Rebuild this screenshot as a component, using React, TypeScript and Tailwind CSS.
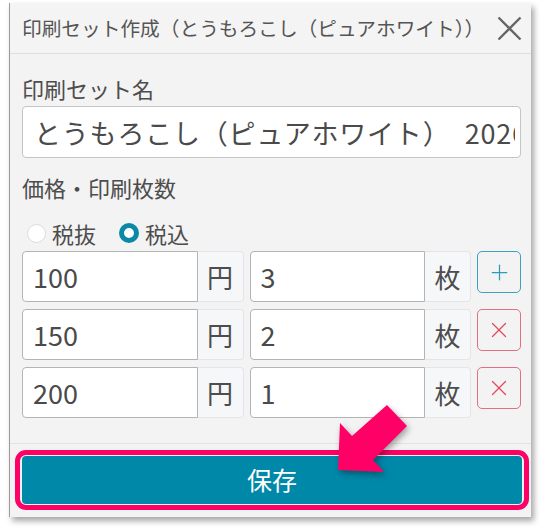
import { Plus, X } from "lucide-react";

type Row = { price: string; count: string; add: boolean };

const rows: Row[] = [
  { price: "100", count: "3", add: true },
  { price: "150", count: "2", add: false },
  { price: "200", count: "1", add: false },
];

const Radio = ({ checked, label, className }: { checked: boolean; label: string; className?: string }) => (
  <label className={`flex items-center ${className ?? ""}`}>
    <span
      className={
        checked
          ? "w-[20px] h-[20px] rounded-full border-[5px] border-[#0a8aa6] bg-white"
          : "w-[19px] h-[19px] rounded-full border border-[#dcdcdc] bg-white"
      }
    />
    <span className="ml-[6px] text-[22px] leading-[30px]">{label}</span>
  </label>
);

const Group = ({ value, unit }: { value: string; unit: string }) => (
  <div className="flex flex-1 min-w-0">
    <input
      readOnly
      value={value}
      className="w-0 min-w-0 flex-1 h-full bg-white border border-[#b4b4b4] rounded-l-[4px] pl-[10px] text-[27px] text-[#4a4a4a] outline-none"
    />
    <span className="w-[46px] shrink-0 flex items-center justify-center bg-[#f6f7f9] border border-l-0 border-[#e3e5e8] rounded-r-[4px] text-[26px]">
      {unit}
    </span>
  </div>
);

const PriceRow = ({ row }: { row: Row }) => (
  <div className="flex h-[51px] gap-[6px]">
    <Group value={row.price} unit="円" />
    <Group value={row.count} unit="枚" />
    {row.add ? (
      <button className="w-[44px] h-[42px] shrink-0 rounded-[5px] border border-[#3d9fc2] text-[#2a9cc0] flex items-center justify-center">
        <Plus size={25} strokeWidth={1.2} />
      </button>
    ) : (
      <button className="w-[44px] h-[42px] shrink-0 rounded-[5px] border border-[#e2707e] text-[#e2475c] flex items-center justify-center">
        <X size={26} strokeWidth={1.2} />
      </button>
    )}
  </div>
);

export default function App() {
  return (
    <div className="relative w-[540px] h-[531px] bg-white pt-[3px] pl-[9px] font-['Noto_Sans_CJK_JP','Noto_Sans',sans-serif] text-[#4d4d4d]">
      <div className="w-[522px] h-[514px] flex flex-col bg-[#f3f3f3] border-l border-[#9a9a9a] shadow-[3px_4px_6px_rgba(0,0,0,0.35)]">
        {/* header */}
        <header className="h-[51px] flex items-center justify-between pl-[12px] pr-[9px] border-b border-[#dedede] bg-[#f4f4f4]">
          <h1 className="text-[19.7px] leading-[26px] text-[#555] whitespace-nowrap">印刷セット作成（とうもろこし（ピュアホワイト））</h1>
          <svg width="25" height="25" viewBox="0 0 25 25" className="shrink-0">
            <path d="M1.5 1.5 L23.5 23.5 M23.5 1.5 L1.5 23.5" stroke="#666" strokeWidth="2.4" fill="none" />
          </svg>
        </header>

        {/* body */}
        <div className="pl-[12px] pr-[10px] pt-[19px] pb-[25px] border-b border-[#e2e2e2]">
          <div className="text-[22px] leading-[30px]">印刷セット名</div>
          <input
            readOnly
            value="とうもろこし（ピュアホワイト）　2026年"
            className="mt-[3px] w-full h-[52px] bg-white border border-[#c4c4c4] rounded-[4px] pl-[11px] pr-[5px] text-[27px] tracking-[0.8px] text-[#4a4a4a] outline-none"
          />
          <div className="mt-[14px] text-[22px] leading-[30px]">価格・印刷枚数</div>
          <div className="mt-[16px] h-[30px] flex items-center">
            <Radio checked={false} label="税抜" className="ml-[5px]" />
            <Radio checked={true} label="税込" className="ml-[23px]" />
          </div>
          <div className="mt-[3px] flex flex-col gap-[7px]">
            {rows.map((row) => (
              <PriceRow key={row.price} row={row} />
            ))}
          </div>
        </div>

        {/* footer */}
        <div className="pl-[12px] pr-[9px] pt-[12px]">
          <div className="relative">
            <button className="w-full h-[48px] rounded-[4px] bg-[#0088a8] text-white text-[25px]">保存</button>
            <span className="absolute -inset-x-[7px] -inset-y-[6px] border-[5px] border-[#ff0066] rounded-[11px]" />
          </div>
        </div>
      </div>

      {/* annotation arrow */}
      <svg
        width="540"
        height="531"
        className="absolute left-0 top-0 pointer-events-none drop-shadow-[2px_3px_3px_rgba(0,0,0,0.35)]"
      >
        <polygon points="338,470 340,423 352,436 387,405 407,426 373,460 384,472" fill="#ff0066" />
      </svg>
    </div>
  );
}
